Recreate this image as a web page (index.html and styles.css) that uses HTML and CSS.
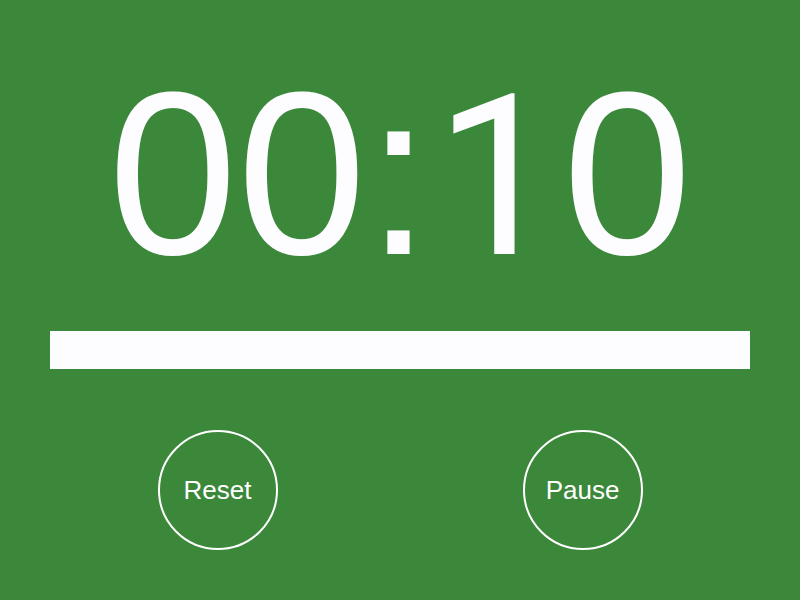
FILE: index.html
```html
<!DOCTYPE html>
<html>
<head>
<meta charset="utf-8">
<link rel="stylesheet" href="styles.css">
</head>
<body>
<main class="timer">
  <div class="time">00:<span class="one">1</span>0</div>
  <div class="progress"></div>
  <div class="controls">
    <button class="btn">Reset</button>
    <button class="btn">Pause</button>
  </div>
</main>
</body>
</html>
```
FILE: styles.css
```css
html, body {
  margin: 0;
  padding: 0;
  background: #3b883b;
  width: 800px;
  height: 600px;
  overflow: hidden;
}
.timer {
  display: flex;
  flex-direction: column;
  align-items: center;
  font-family: "Liberation Sans", Arial, sans-serif;
  color: #fff;
}
.time {
  padding-top: 58px;
  height: 233px;
  font-size: 232px;
  line-height: 232px;
  text-align: center;
  color: #fdfdff;
  white-space: nowrap;
}
.one {
  font-family: Roboto, "Liberation Sans", sans-serif;
  font-size: 224px;
  margin: 0 2px 0 4px;
}
.progress {
  margin-top: 40px;
  width: 700px;
  height: 38px;
  background: #fdfdff;
}
.controls {
  margin-top: 61px;
  display: flex;
  justify-content: center;
  gap: 245px;
}
.btn {
  width: 120px;
  height: 120px;
  border-radius: 50%;
  border: 2px solid #fff;
  background: transparent;
  color: #fff;
  font-family: "Liberation Sans", Arial, sans-serif;
  font-size: 26px;
  padding: 0;
  display: flex;
  align-items: center;
  justify-content: center;
  box-sizing: border-box;
}
```
